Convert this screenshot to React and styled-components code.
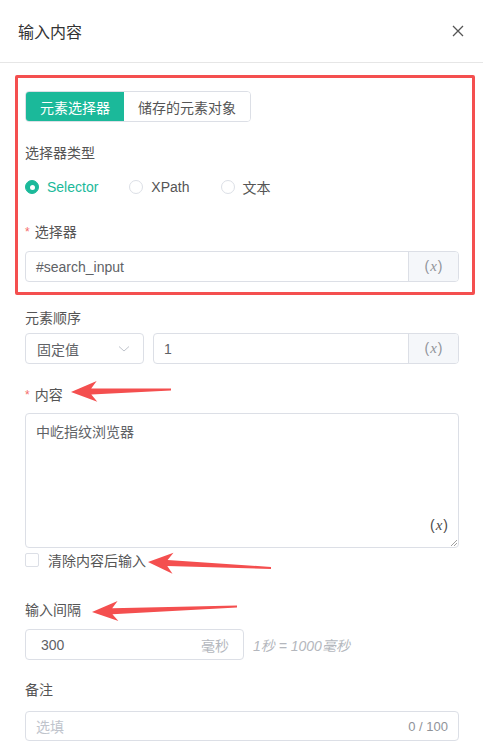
import React, { useState } from 'react';
import styled, { createGlobalStyle } from 'styled-components';

const TEAL = '#1bb99a';
const RED = '#f44f4f';

const GlobalStyle = createGlobalStyle`
  html, body {
    margin: 0;
    padding: 0;
    background: #fff;
  }
  body {
    font-family: "Liberation Sans", "Noto Sans CJK SC", sans-serif;
    font-size: 14px;
    color: #606266;
  }
  * { box-sizing: border-box; }
`;

// arrow polygon from tip to tail, tapering shaft
function arrowPoints([tx, ty], [ex, ey], headLen, headHalf, shaftStart, shaftEnd) {
  const dx = ex - tx;
  const dy = ey - ty;
  const len = Math.hypot(dx, dy);
  const ux = dx / len;
  const uy = dy / len;
  const nx = -uy;
  const ny = ux;
  const p = (x, y) => `${x.toFixed(1)},${y.toFixed(1)}`;
  const notch = headLen * 0.78;
  return [
    p(tx, ty),
    p(tx + ux * headLen + nx * headHalf, ty + uy * headLen + ny * headHalf),
    p(tx + ux * notch + nx * shaftStart, ty + uy * notch + ny * shaftStart),
    p(ex + nx * shaftEnd, ey + ny * shaftEnd),
    p(ex - nx * shaftEnd, ey - ny * shaftEnd),
    p(tx + ux * notch - nx * shaftStart, ty + uy * notch - ny * shaftStart),
    p(tx + ux * headLen - nx * headHalf, ty + uy * headLen - ny * headHalf),
  ].join(' ');
}

const arrows = [
  { tip: [71, 392], tail: [171, 389.5], head: 26, half: 10.5 },
  { tip: [148, 562], tail: [271, 568], head: 25, half: 10.5 },
  { tip: [92, 612], tail: [237, 606.5], head: 26, half: 10 },
];

function VarIcon({ dark }) {
  return (
    <VarMark $dark={dark}>
      (<i>x</i>)
    </VarMark>
  );
}

function App() {
  const [tab, setTab] = useState(0);
  const [type, setType] = useState('selector');

  return (
    <Page>
      <GlobalStyle />
      <Header>
        <Title>输入内容</Title>
        <CloseBtn aria-label="close">
          <svg width="12" height="12" viewBox="0 0 12 12">
            <path d="M1 1 L11 11 M11 1 L1 11" stroke="#555" strokeWidth="1.3" />
          </svg>
        </CloseBtn>
      </Header>

      <Body>
        <Highlight>
          <Tabs>
            <Tab $active={tab === 0} onClick={() => setTab(0)}>元素选择器</Tab>
            <Tab $active={tab === 1} onClick={() => setTab(1)}>储存的元素对象</Tab>
          </Tabs>

          <Label $top={21}>选择器类型</Label>
          <RadioRow>
            {[
              ['selector', 'Selector'],
              ['xpath', 'XPath'],
              ['text', '文本'],
            ].map(([key, text]) => (
              <Radio key={key} $checked={type === key} onClick={() => setType(key)}>
                <RadioDot $checked={type === key} />
                {text}
              </Radio>
            ))}
          </RadioRow>

          <Label $top={25} $bottom={9} $required>选择器</Label>
          <InputGroup>
            <TextField>#search_input</TextField>
            <Addon>
              <VarIcon />
            </Addon>
          </InputGroup>
        </Highlight>

        <Label $top={13} $bottom={5}>元素顺序</Label>
        <Row>
          <Select>
            固定值
            <svg width="12" height="8" viewBox="0 0 12 8">
              <path d="M1 1.5 L6 6 L11 1.5" fill="none" stroke="#c0c4cc" strokeWidth="1" />
            </svg>
          </Select>
          <InputGroup $grow>
            <TextField>1</TextField>
            <Addon>
              <VarIcon />
            </Addon>
          </InputGroup>
        </Row>

        <Label $top={21} $bottom={8} $required>内容</Label>
        <TextArea>
          中屹指纹浏览器
          <TextAreaVar>
            <VarIcon dark />
          </TextAreaVar>
          <ResizeHandle width="7" height="7" viewBox="0 0 7 7">
            <path d="M1 7 L7 1 M4 7 L7 4" stroke="#888" strokeWidth="0.8" />
          </ResizeHandle>
        </TextArea>

        <CheckRow>
          <CheckBox />
          清除内容后输入
        </CheckRow>

        <Label $top={30} $bottom={9}>输入间隔</Label>
        <Row>
          <NumberField>
            <span>300</span>
            <Suffix>毫秒</Suffix>
          </NumberField>
          <Hint>1秒 = 1000毫秒</Hint>
        </Row>

        <Label $top={20} $bottom={11}>备注</Label>
        <NoteField>
          <Placeholder>选填</Placeholder>
          <Counter>0 / 100</Counter>
        </NoteField>
      </Body>

      <Overlay width="483" height="755" viewBox="0 0 483 755">
        {arrows.map((a, i) => (
          <polygon
            key={i}
            points={arrowPoints(a.tip, a.tail, a.head, a.half, 3, 1)}
            fill={RED}
          />
        ))}
      </Overlay>
    </Page>
  );
}

const Page = styled.div`
  position: relative;
  width: 483px;
  height: 755px;
  overflow: hidden;
  background: #fff;
`;

const Header = styled.header`
  height: 63px;
  display: flex;
  align-items: center;
  justify-content: space-between;
  padding: 0 19px 1px 18px;
  border-bottom: 1px solid #e6e6e6;
`;

const Title = styled.h1`
  margin: 0;
  font-size: 16px;
  font-weight: 400;
  color: #333;
`;

const CloseBtn = styled.button`
  border: 0;
  background: none;
  padding: 0;
  display: flex;
  cursor: pointer;
`;

const Body = styled.div`
  padding: 12px 24px 0 25px;
`;

const Highlight = styled.section`
  margin: 0 -16px 0 -10px;
  padding: 13px 13px 10px 7px;
  border: 3px solid ${RED};
  border-radius: 2px;
`;

const Tabs = styled.div`
  display: inline-flex;
  height: 31px;
  border: 1px solid #dcdfe6;
  border-radius: 4px;
  overflow: hidden;
`;

const Tab = styled.div`
  display: flex;
  align-items: center;
  padding: 0 14px;
  font-size: 14px;
  cursor: pointer;
  background: ${p => (p.$active ? TEAL : '#fff')};
  color: ${p => (p.$active ? '#fff' : '#555')};
`;

const Label = styled.div`
  margin-top: ${p => p.$top || 0}px;
  margin-bottom: ${p => p.$bottom || 0}px;
  height: 20px;
  line-height: 20px;
  font-size: 14px;
  font-weight: 400;
  color: #555;

  &::before {
    content: ${p => (p.$required ? "'*'" : 'none')};
    color: #f56c6c;
    margin-right: 5px;
    font-size: 12px;
    vertical-align: 1px;
  }
`;

const RadioRow = styled.div`
  margin-top: 14px;
  height: 20px;
  display: flex;
  align-items: center;
`;

const Radio = styled.label`
  display: flex;
  align-items: center;
  margin-right: 31px;
  font-size: 14px;
  cursor: pointer;
  color: ${p => (p.$checked ? TEAL : '#555')};
`;

const RadioDot = styled.span`
  width: 14px;
  height: 14px;
  border-radius: 50%;
  margin-right: 8px;
  border: 1px solid ${p => (p.$checked ? TEAL : '#dcdfe6')};
  background: ${p => (p.$checked ? TEAL : '#fff')};
  display: flex;
  align-items: center;
  justify-content: center;

  &::after {
    content: '';
    width: 5px;
    height: 5px;
    border-radius: 50%;
    background: #fff;
    display: ${p => (p.$checked ? 'block' : 'none')};
  }
`;

const Row = styled.div`
  display: flex;
  align-items: center;
  gap: 9px;
`;

const InputGroup = styled.div`
  display: flex;
  height: 31px;
  border: 1px solid #dcdfe6;
  border-radius: 4px;
  overflow: hidden;
  flex: ${p => (p.$grow ? 1 : 'none')};
`;

const TextField = styled.div`
  flex: 1;
  display: flex;
  align-items: center;
  padding: 0 10px;
  color: #606266;
`;

const Addon = styled.div`
  width: 50px;
  display: flex;
  align-items: center;
  justify-content: center;
  background: #f5f7fa;
  border-left: 1px solid #dcdfe6;
`;

const VarMark = styled.span`
  font-family: "Liberation Sans", sans-serif;
  font-size: 14px;
  color: ${p => (p.$dark ? '#4a4a4a' : '#909399')};
  i {
    margin: 0 1px;
    font-family: "Liberation Serif", serif;
    font-size: 15px;
  }
`;

const Select = styled.div`
  width: 119px;
  height: 31px;
  display: flex;
  align-items: center;
  justify-content: space-between;
  padding: 0 13px 0 11px;
  border: 1px solid #dcdfe6;
  border-radius: 4px;
  color: #606266;
`;

const TextArea = styled.div`
  position: relative;
  height: 135px;
  padding: 8px 10px;
  line-height: 20px;
  border: 1px solid #dcdfe6;
  border-radius: 4px;
  color: #606266;
`;

const TextAreaVar = styled.span`
  position: absolute;
  right: 10px;
  bottom: 12px;
`;

const ResizeHandle = styled.svg`
  position: absolute;
  right: 1px;
  bottom: 1px;
`;

const CheckRow = styled.label`
  margin-top: 2px;
  height: 20px;
  display: flex;
  align-items: center;
  color: #555;
`;

const CheckBox = styled.span`
  width: 14px;
  height: 14px;
  margin-right: 9px;
  border: 1px solid #dcdfe6;
  border-radius: 2px;
  background: #fff;
`;

const NumberField = styled.div`
  width: 219px;
  height: 31px;
  display: flex;
  align-items: center;
  justify-content: space-between;
  padding: 0 14px 0 15px;
  border: 1px solid #dcdfe6;
  border-radius: 4px;
  color: #606266;
`;

const Suffix = styled.span`
  color: #b4b7bd;
`;

const Hint = styled.span`
  font-style: italic;
  color: #b4b7bd;
`;

const NoteField = styled.div`
  height: 30px;
  display: flex;
  align-items: center;
  justify-content: space-between;
  padding: 0 10px;
  border: 1px solid #dcdfe6;
  border-radius: 4px;
`;

const Placeholder = styled.span`
  color: #c0c4cc;
`;

const Counter = styled.span`
  font-size: 13px;
  color: #909399;
`;

const Overlay = styled.svg`
  position: absolute;
  left: 0;
  top: 0;
  pointer-events: none;
`;

export default App;
